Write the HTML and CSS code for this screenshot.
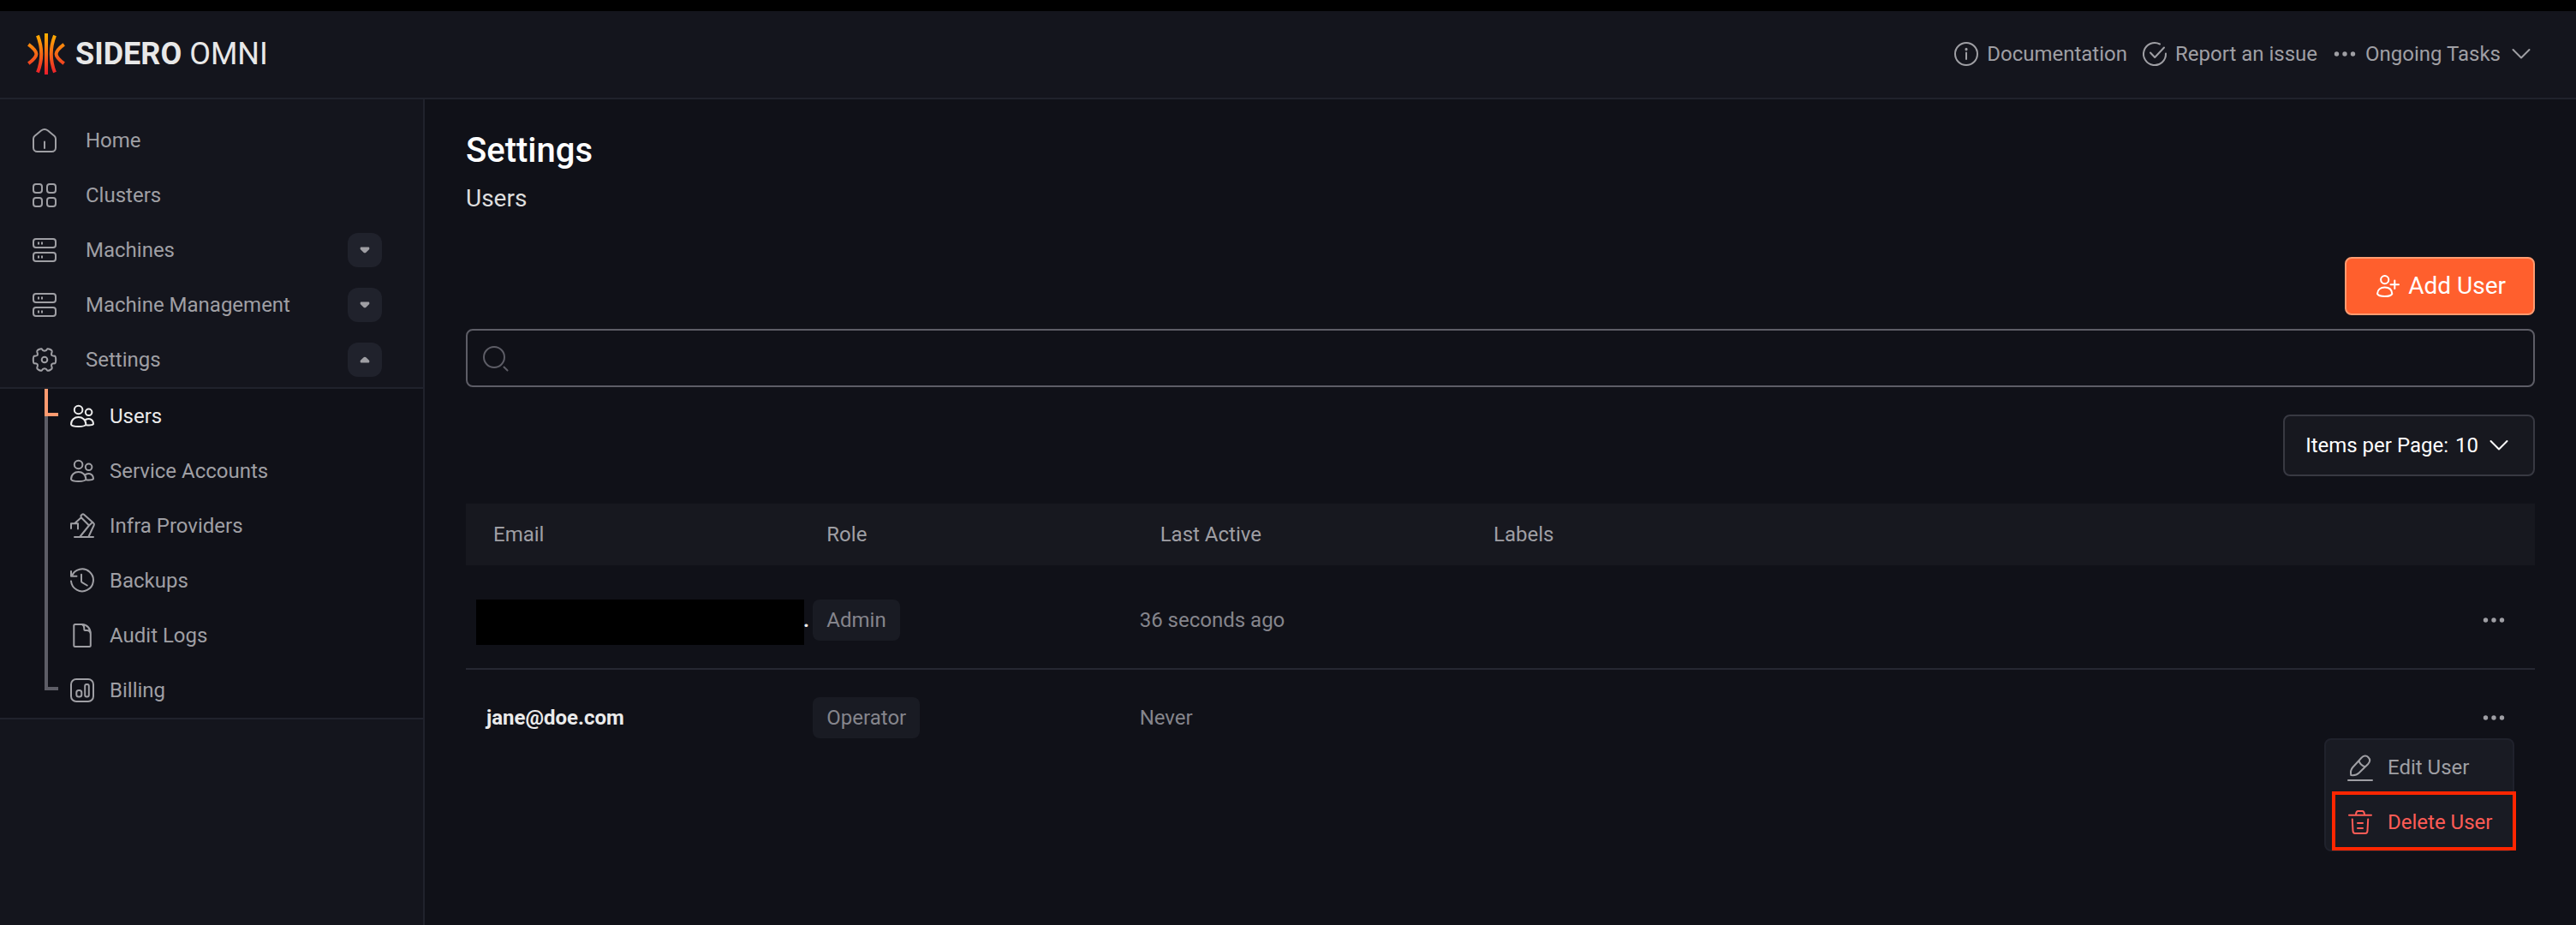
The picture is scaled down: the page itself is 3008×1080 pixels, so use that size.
FILE: index.html
```html
<!DOCTYPE html>
<html lang="en">
<head>
<meta charset="utf-8">
<meta name="viewport" content="width=device-width, initial-scale=1">
<title>Users - Sidero Omni</title>
<link rel="stylesheet" href="styles.css">
</head>
<body>
<svg class="sprite" aria-hidden="true">
  <symbol id="i-home" viewBox="0 0 32 32"><path d="M3 14Q3 12 4.500 10.700L12 4.500Q16 1.500 20 4.500L27.500 10.700Q29 12 29 14V24.500A4.500 4.500 0 0 1 24.500 29H7.500A4.500 4.500 0 0 1 3 24.500ZM16 17.500V25"/></symbol>
  <symbol id="i-grid" viewBox="0 0 32 32"><rect x="3" y="3" width="10" height="10" rx="3"/><rect x="19" y="3" width="10" height="10" rx="3"/><rect x="3" y="19" width="10" height="10" rx="3"/><rect x="19" y="19" width="10" height="10" rx="3"/></symbol>
  <symbol id="i-server" viewBox="0 0 32 32"><rect x="3" y="3" width="26" height="10" rx="3"/><rect x="3" y="19" width="26" height="10" rx="3"/><path stroke-linecap="butt" d="M9 6.500v3M13 6.500v3M9 22.500v3M13 22.500v3"/></symbol>
  <symbol id="i-gear" viewBox="0 0 32 32"><circle cx="16" cy="16" r="3.300"/><path d="M12.600 3.200Q14 5.800 16 5.800T19.400 3.200Q20.500 2.900 22.600 4Q25 5.200 24.700 6.800Q23.400 10 24.600 11Q25.800 11.800 28 11.600Q29.200 12 29.200 16Q29.200 20 28 20.400Q25.800 20.200 24.600 21Q23.400 22 24.700 25.200Q25 26.800 22.600 28Q20.500 29.100 19.400 28.800Q18 26.200 16 26.200T12.600 28.800Q11.500 29.100 9.400 28Q7 26.800 7.300 25.200Q8.600 22 7.400 21Q6.200 20.200 4 20.400Q2.800 20 2.800 16Q2.800 12 4 11.600Q6.200 11.800 7.400 11Q8.600 10 7.300 6.800Q7 5.200 9.400 4Q11.500 2.900 12.600 3.200Z"/></symbol>
  <symbol id="i-users" viewBox="0 0 32 32"><circle cx="11.600" cy="8.500" r="4.800"/><circle cx="23.600" cy="11.300" r="3.800"/><path d="M3 25.500C3 20 7 17 11.600 17S20.200 20 20.400 25.500Q19.500 28 11.600 28T3 25.500ZM19 20.800C22 17.800 29 18.200 29 25.200Q27.500 27 20.400 26.300"/></symbol>
  <symbol id="i-arm" viewBox="0 0 32 32"><path d="M7 29H29M3 19V13.300H11V19.500M7 13.300L14.800 6.300M14.500 4L16 2.600Q17 1.800 18 2.700L29 12.500Q30.500 13.800 29.700 15.300L23.500 28.500M13.500 28.500L24 15.500M14.500 4L14.800 6.300L24 15.500L28 11.800"/></symbol>
  <symbol id="i-history" viewBox="0 0 32 32"><path d="M3 5V10.700H9.500M3.800 10.700A13 13 0 1 1 3 16.500M15 8.800V16.500Q15 17.500 16 18.200L21.700 21.500"/></symbol>
  <symbol id="i-file" viewBox="0 0 32 32"><path d="M6.300 4.500Q6.300 3 7.800 3H16C21.500 3 25.800 8 25.800 14V27.500Q25.800 29 24.300 29H7.800Q6.300 29 6.300 27.500ZM16 3.200Q18.300 4 18.300 7.500V9Q18.300 10 19.300 10H21.500Q25 10 25.800 14"/></symbol>
  <symbol id="i-chart" viewBox="0 0 32 32"><rect x="3" y="3" width="26" height="26" rx="6"/><rect x="9.300" y="16" width="6" height="7.500" rx="2.500"/><rect x="19.200" y="9" width="4.600" height="14.500" rx="2"/></symbol>
  <symbol id="i-info" viewBox="0 0 32 32"><circle cx="16" cy="16" r="13"/><path d="M16 14.500V22"/><path d="M16 10.200v.6" stroke-width="3"/></symbol>
  <symbol id="i-check" viewBox="0 0 32 32"><path d="M22 4.500A13 13 0 1 0 29 15.500M11 14.500L16.200 20L27 8.500"/></symbol>
  <symbol id="i-dots" viewBox="0 0 32 32"><g fill="currentColor" stroke="none"><circle cx="6.500" cy="16" r="2.700"/><circle cx="16" cy="16" r="2.700"/><circle cx="25.500" cy="16" r="2.700"/></g></symbol>
  <symbol id="i-chevron" viewBox="0 0 32 32"><path d="M6.500 11L16 20.500L25.500 11"/></symbol>
  <symbol id="i-caret" viewBox="0 0 12 8"><path d="M1.700 1.500H10.300V2.500L7 5.700Q6 6.700 5 5.700L1.700 2.500Z" fill="currentColor"/></symbol>
  <symbol id="i-search" viewBox="0 0 32 32"><circle cx="15" cy="15" r="12"/><path d="M26.500 26.500L30.500 30.500"/></symbol>
  <symbol id="i-adduser" viewBox="0 0 32 32"><circle cx="12.700" cy="8.600" r="4.600"/><path d="M4 25C4.200 20.200 7.800 17.500 12.700 17.500S21 20.200 21.300 25Q20 28 12.700 28T4 25ZM24.300 9.500V19M19.500 14.200H29"/></symbol>
  <symbol id="i-edit" viewBox="0 0 32 32"><path d="M2 31H30M5.200 25C4.500 21 5 18.500 7.200 16L17.500 4.800C20 2 23.200 1.800 25.500 4.200C27.800 6.500 27.600 9.500 25 12.200L14.500 22.500C12 25 9 25.500 5.200 25ZM14.500 8C15.300 11.500 18 14 21.800 15.200"/></symbol>
  <symbol id="i-trash" viewBox="0 0 32 32"><path d="M3 7.700H29M11 7Q11.300 3 13.500 3H18.500Q20.700 3 21 7M6.800 12.500L7.500 26Q7.700 29 10 29H22Q24.300 29 24.500 26L25.200 12.500M13 17H19M13 23H19"/></symbol>
</svg>

<header class="topbar">
  <a class="brand" href="#">
    <svg class="brand-mark" viewBox="0 0 44 48" aria-hidden="true">
      <defs><linearGradient id="flame" gradientUnits="userSpaceOnUse" x1="0" y1="0" x2="0" y2="48"><stop offset="0" stop-color="#ffb200"/><stop offset="1" stop-color="#ec1c2c"/></linearGradient></defs>
      <path stroke="url(#flame)" stroke-width="4" fill="none" d="M22 0L22.010 48M12 2.500Q20.500 24 12 45.500M32 2.500Q23.500 24 32 45.500M1.300 12.800C13.500 22 13.500 26 1.300 35.200M42.700 12.800C30.500 22 30.500 26 42.700 35.200"/>
    </svg>
    <span class="brand-name"><b>SIDERO</b> OMNI</span>
  </a>
  <nav class="toplinks" aria-label="Help">
    <a class="toplink" href="#"><svg class="icon"><use href="#i-info"/></svg>Documentation</a>
    <a class="toplink" href="#"><svg class="icon"><use href="#i-check"/></svg>Report an issue</a>
    <button class="toplink" type="button"><svg class="icon"><use href="#i-dots"/></svg>Ongoing Tasks<svg class="icon"><use href="#i-chevron"/></svg></button>
  </nav>
</header>

<div class="shell">
  <nav class="sidebar" aria-label="Main">
    <div class="nav-row"><a class="nav-link" href="#"><svg class="icon"><use href="#i-home"/></svg>Home</a></div>
    <div class="nav-row"><a class="nav-link" href="#"><svg class="icon"><use href="#i-grid"/></svg>Clusters</a></div>
    <div class="nav-row"><a class="nav-link" href="#"><svg class="icon"><use href="#i-server"/></svg>Machines</a><button class="toggle" type="button" aria-label="Expand Machines"><svg class="caret"><use href="#i-caret"/></svg></button></div>
    <div class="nav-row"><a class="nav-link" href="#"><svg class="icon"><use href="#i-server"/></svg>Machine Management</a><button class="toggle" type="button" aria-label="Expand Machine Management"><svg class="caret"><use href="#i-caret"/></svg></button></div>
    <div class="nav-row"><a class="nav-link" href="#"><svg class="icon"><use href="#i-gear"/></svg>Settings</a><button class="toggle open" type="button" aria-label="Collapse Settings"><svg class="caret"><use href="#i-caret"/></svg></button></div>
    <div class="subnav">
      <a class="sub-link active" href="#" aria-current="page"><svg class="icon"><use href="#i-users"/></svg>Users</a>
      <a class="sub-link" href="#"><svg class="icon"><use href="#i-users"/></svg>Service Accounts</a>
      <a class="sub-link" href="#"><svg class="icon"><use href="#i-arm"/></svg>Infra Providers</a>
      <a class="sub-link" href="#"><svg class="icon"><use href="#i-history"/></svg>Backups</a>
      <a class="sub-link" href="#"><svg class="icon"><use href="#i-file"/></svg>Audit Logs</a>
      <a class="sub-link" href="#"><svg class="icon"><use href="#i-chart"/></svg>Billing</a>
    </div>
  </nav>

  <main class="content">
    <h1 class="title">Settings</h1>
    <h2 class="subtitle">Users</h2>
    <button class="add-user" type="button"><svg class="icon"><use href="#i-adduser"/></svg>Add User</button>
    <div class="search">
      <svg class="icon"><use href="#i-search"/></svg>
      <input class="search-input" type="text" aria-label="Search users">
    </div>
    <div class="pager">
      <label for="per-page">Items per Page:</label>
      <select id="per-page" class="pager-select"><option>10</option></select>
      <svg class="icon"><use href="#i-chevron"/></svg>
    </div>
    <table class="users">
      <thead>
        <tr><th scope="col">Email</th><th scope="col">Role</th><th scope="col">Last Active</th><th scope="col">Labels</th></tr>
      </thead>
      <tbody>
        <tr>
          <td class="email"><span class="redacted"></span>.</td>
          <td><span class="role">Admin</span></td>
          <td>36 seconds ago</td>
          <td class="actions"><button class="more" type="button" aria-label="User actions"><svg class="icon"><use href="#i-dots"/></svg></button></td>
        </tr>
        <tr>
          <td class="email">jane@doe.com</td>
          <td><span class="role">Operator</span></td>
          <td>Never</td>
          <td class="actions">
            <button class="more" type="button" aria-label="User actions" aria-expanded="true"><svg class="icon"><use href="#i-dots"/></svg></button>
            <div class="menu">
              <button class="menu-item" type="button"><svg class="icon"><use href="#i-edit"/></svg>Edit User</button>
              <button class="menu-item danger" type="button"><svg class="icon"><use href="#i-trash"/></svg>Delete User</button>
            </div>
          </td>
        </tr>
      </tbody>
    </table>
  </main>
</div>
</body>
</html>
```
FILE: styles.css
```css
:root {
  --bg: #101118;
  --panel: #14151d;
  --raised: #17181f;
  --line: #20222c;
  --text: #9f9fa4;
  --dim: #85858c;
  --bright: #ebebeb;
}

*, *::before, *::after { box-sizing: border-box; }

body {
  margin: 0;
  min-height: 100vh;
  display: flex;
  flex-direction: column;
  border-top: 13px solid #000;
  background: var(--bg);
  color: var(--text);
  font: 24px/32px Roboto, "Liberation Sans", sans-serif;
}

a { color: inherit; text-decoration: none; }

button, input, select {
  margin: 0;
  padding: 0;
  border: 0;
  background: none;
  color: inherit;
  font: inherit;
}

.sprite { display: none; }

.icon {
  flex: none;
  width: 32px;
  height: 32px;
  fill: none;
  stroke: currentColor;
  stroke-width: 2;
  stroke-linecap: round;
  stroke-linejoin: round;
}

/* Top bar */
.topbar {
  display: flex;
  align-items: center;
  justify-content: space-between;
  height: 103px;
  padding: 0 48px 1px 32px;
  border-bottom: 2px solid var(--line);
  background: var(--panel);
}

.brand { display: flex; align-items: center; gap: 12px; }
.brand-mark { width: 44px; height: 48px; }
.brand-name { color: #e8e8e8; font-size: 36px; line-height: 48px; }
.toplinks { display: flex; gap: 16px; }
.toplink { display: flex; align-items: center; gap: 8px; }

.shell { flex: 1; display: flex; }

/* Sidebar */
.sidebar {
  flex: none;
  width: 496px;
  padding-top: 16px;
  border-right: 2px solid var(--line);
  background: var(--panel);
}

.nav-row {
  display: flex;
  align-items: center;
  justify-content: space-between;
  height: 64px;
  padding: 0 48px 0 36px;
}

.nav-link { display: flex; align-items: center; gap: 32px; }

.toggle {
  display: grid;
  place-items: center;
  width: 40px;
  height: 40px;
  border-radius: 12px;
  background: var(--line);
}

.caret {
  width: 12px;
  height: 8px;
  stroke: currentColor;
  stroke-width: 2;
  stroke-linejoin: round;
}

.open .caret { transform: rotate(180deg); }

.subnav {
  border: solid var(--line);
  border-width: 2px 0;
  background: var(--bg);
}

.sub-link {
  position: relative;
  display: flex;
  align-items: center;
  gap: 16px;
  height: 64px;
  padding-left: 80px;
}

/* Tree line beside the sub pages */
.sub-link::before {
  content: "";
  position: absolute;
  top: -32px;
  left: 52px;
  width: 4px;
  height: 64px;
  background: #5d5d66;
}

.sub-link:first-child::before,
.sub-link:last-child::before {
  width: 16px;
  border: solid #5d5d66;
  border-width: 0 0 4px 4px;
  background: none;
}

.sub-link:first-child::before { top: 0; height: 32px; }
.sub-link.active { color: var(--bright); }
.sub-link.active:first-child::before { border-color: #ff9b70; }

/* Page */
.content {
  flex: 1;
  display: flex;
  flex-direction: column;
  min-width: 0;
  padding: 33px 48px;
}

.title {
  margin: 0 0 8px;
  color: #fff;
  font-size: 40px;
  font-weight: 500;
  line-height: 54px;
}

.subtitle {
  margin: 0 0 47px;
  color: #dedede;
  font-size: 28px;
  font-weight: 400;
  line-height: 42px;
}

.add-user {
  display: flex;
  align-items: center;
  align-self: flex-end;
  gap: 8px;
  height: 68px;
  padding: 0 32px;
  border: 2px solid #ff9b70;
  border-radius: 8px;
  background: #ff5f2d;
  color: #fff;
  font-size: 28px;
}

.search {
  display: flex;
  align-items: center;
  gap: 16px;
  height: 68px;
  margin: 16px 0 32px;
  padding: 0 16px;
  border: 2px solid #5d5d66;
  border-radius: 8px;
  color: #5d5d66;
}

.search-input { flex: 1; height: 60px; color: var(--bright); outline: 0; }

.pager {
  display: flex;
  align-items: center;
  align-self: flex-end;
  gap: 8px;
  height: 72px;
  margin-bottom: 32px;
  padding: 0 24px;
  border: 2px solid #383942;
  border-radius: 8px;
  background: var(--raised);
  color: #fff;
}

.pager-select { appearance: none; }

/* Users table */
.users, .users thead, .users tbody { display: block; }
.users tr { display: grid; align-items: center; }
.users th, .users td { padding: 0; text-align: left; font-weight: 400; }

.users thead tr {
  grid-template-columns: repeat(6, 1fr);
  height: 72px;
  padding: 0 48px 0 32px;
  background: var(--raised);
}

.users tbody { padding-top: 8px; color: var(--dim); }

.users tbody tr {
  grid-template-columns: repeat(6, 1fr) 80px;
  padding: 32px 24px;
  border-bottom: 2px solid #262832;
}

.users tbody tr:last-child { border-bottom: 0; }

.users .email {
  position: relative;
  display: flex;
  align-items: center;
  height: 48px;
  color: var(--bright);
  font-weight: 700;
}

.redacted { width: 370px; }

.redacted::before {
  content: "";
  position: absolute;
  top: 0;
  left: -12px;
  width: 383px;
  height: 53px;
  background: #000;
}

.role {
  display: inline-block;
  padding: 8px 16px;
  border-radius: 8px;
  background: #191b23;
}

.users .actions {
  position: relative;
  grid-column: 7;
  display: flex;
  justify-content: flex-end;
}

.more {
  display: grid;
  place-items: center;
  width: 48px;
  height: 48px;
  color: var(--text);
}

.menu {
  position: absolute;
  z-index: 1;
  top: 100%;
  right: 0;
  width: 222px;
  border: 2px solid var(--line);
  border-radius: 8px;
  background: #191b23;
  color: var(--text);
}

.menu-item {
  position: relative;
  display: flex;
  align-items: center;
  gap: 16px;
  width: 100%;
  height: 64px;
  padding-left: 24px;
  white-space: nowrap;
}

.danger { color: #ff5c56; }

/* Highlight frame around the destructive action */
.danger::after {
  content: "";
  position: absolute;
  inset: -4px -4px -1px 7px;
  border: 4px solid #ff2600;
}
```
